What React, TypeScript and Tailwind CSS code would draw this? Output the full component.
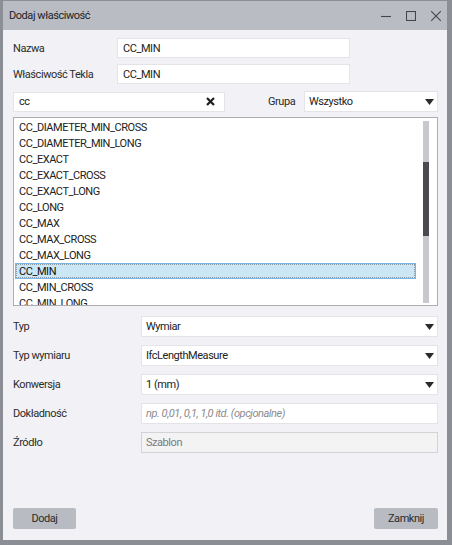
import type { ReactNode } from "react";

const ITEMS = [
  "CC_DIAMETER_MIN_CROSS",
  "CC_DIAMETER_MIN_LONG",
  "CC_EXACT",
  "CC_EXACT_CROSS",
  "CC_EXACT_LONG",
  "CC_LONG",
  "CC_MAX",
  "CC_MAX_CROSS",
  "CC_MAX_LONG",
  "CC_MIN",
  "CC_MIN_CROSS",
  "CC_MIN_LONG",
];

const SELECTED = "CC_MIN";

function Caret() {
  return (
    <svg width="9" height="6" viewBox="0 0 9 6" className="shrink-0">
      <path d="M0 0h9L4.5 6z" fill="#2b2b2b" />
    </svg>
  );
}

function TextBox({ children, className = "" }: { children?: ReactNode; className?: string }) {
  return (
    <div className={`flex h-[20px] items-center border border-[#e3e3e8] bg-white px-[5px] text-[#222] ${className}`}>
      {children}
    </div>
  );
}

function Combo({ value, className = "" }: { value: string; className?: string }) {
  return (
    <div className={`flex h-[21px] items-center justify-between border border-[#e3e3e8] bg-white pl-[4px] pr-[3px] text-[#222] ${className}`}>
      <span>{value}</span>
      <Caret />
    </div>
  );
}

function FieldRow({ label, children }: { label: string; children: ReactNode }) {
  return (
    <div className="flex items-center">
      <span className="w-[128px] shrink-0 text-[#2b2b2b]">{label}</span>
      <div className="flex-1">{children}</div>
    </div>
  );
}

export default function App() {
  return (
    <div
      className="flex h-[545px] w-[452px] flex-col bg-[#8c8e96] pb-[5px] pl-[3px] pr-[5px] pt-px text-[11px] leading-none tracking-[-0.45px]"
      style={{ fontFamily: 'Roboto, "Noto Sans", sans-serif' }}
    >
      {/* Title bar */}
      <div className="flex h-[29px] shrink-0 items-center justify-between bg-[#babcc4] pl-[6px] pr-[6px]">
        <span className="text-[#1e1e1e]">Dodaj właściwość</span>
        <div className="flex items-center gap-[15px] text-[#45474d]">
          <svg width="10" height="10" viewBox="0 0 10 10">
            <path d="M0 5.5h10" stroke="currentColor" strokeWidth="1.1" />
          </svg>
          <svg width="10" height="10" viewBox="0 0 10 10">
            <rect x="0.5" y="0.5" width="9" height="9" fill="none" stroke="currentColor" strokeWidth="1.1" />
          </svg>
          <svg width="10" height="10" viewBox="0 0 10 10">
            <path d="M0 0l10 10M10 0L0 10" stroke="currentColor" strokeWidth="1.1" />
          </svg>
        </div>
      </div>

      {/* Body */}
      <div className="flex flex-1 flex-col bg-[#f2f2f6] pl-[10px] pr-[9px] pt-[8px]">
        <div className="flex flex-col gap-[6px]">
          <div className="flex items-center">
            <span className="w-[104px] shrink-0 text-[#2b2b2b]">Nazwa</span>
            <TextBox className="w-[233px]">CC_MIN</TextBox>
          </div>
          <div className="flex items-center">
            <span className="w-[104px] shrink-0 text-[#2b2b2b]">Właściwość Tekla</span>
            <TextBox className="w-[233px]">CC_MIN</TextBox>
          </div>
        </div>

        <div className="mt-[7px] flex items-center">
          <TextBox className="w-[212px] justify-between pr-[9px]">
            <span>cc</span>
            <svg width="9" height="9" viewBox="0 0 9 9">
              <path d="M1 1l7 7M8 1L1 8" stroke="#1e1e1e" strokeWidth="2.2" />
            </svg>
          </TextBox>
          <span className="ml-[43px] w-[36px] shrink-0 text-[#2b2b2b]">Grupa</span>
          <Combo value="Wszystko" className="h-[20px] flex-1" />
        </div>

        {/* List */}
        <div className="mt-[5px] flex h-[189px] border border-[#adadb0] bg-white">
          <div className="flex-1 overflow-hidden pl-px pt-px">
            {ITEMS.map((item) =>
              item === SELECTED ? (
                <div key={item} className="h-[16px] border border-[#7ab6e4] bg-[#cbe7f5]">
                  <div className="flex h-full items-center border border-dotted border-[#8d9aa3] pl-[2px] text-[#111]">
                    {item}
                  </div>
                </div>
              ) : (
                <div key={item} className="flex h-[16px] items-center pl-[4px] text-[#222]">
                  {item}
                </div>
              )
            )}
          </div>
          <div className="mb-[2px] ml-[7px] mr-[8px] mt-[3px] flex w-[6px] flex-col bg-[#c7c8cd]">
            <div className="mt-[41px] h-[74px] bg-[#4a4b51]" />
          </div>
        </div>

        {/* Properties */}
        <div className="mt-[10px] flex flex-col gap-[8px]">
          <FieldRow label="Typ">
            <Combo value="Wymiar" />
          </FieldRow>
          <FieldRow label="Typ wymiaru">
            <Combo value="IfcLengthMeasure" />
          </FieldRow>
          <FieldRow label="Konwersja">
            <Combo value="1 (mm)" />
          </FieldRow>
          <FieldRow label="Dokładność">
            <div className="flex h-[21px] items-center border border-[#e3e3e8] bg-white px-[4px] italic text-[#8a8a8e]">
              np. 0,01, 0,1, 1,0 itd. (opcjonalne)
            </div>
          </FieldRow>
          <FieldRow label="Źródło">
            <div className="flex h-[21px] items-center border border-[#d3d3d6] bg-[#f3f3f3] px-[4px] text-[#7a7a7e]">
              Szablon
            </div>
          </FieldRow>
        </div>

        {/* Footer */}
        <div className="mb-[11px] mt-auto flex items-center justify-between">
          <button type="button" className="h-[21px] w-[63px] rounded-[2px] bg-[#b9bbc2] text-[#2b2b2b]">
            Dodaj
          </button>
          <button type="button" className="h-[21px] w-[64px] rounded-[2px] bg-[#b9bbc2] text-[#2b2b2b]">
            Zamknij
          </button>
        </div>
      </div>
    </div>
  );
}
